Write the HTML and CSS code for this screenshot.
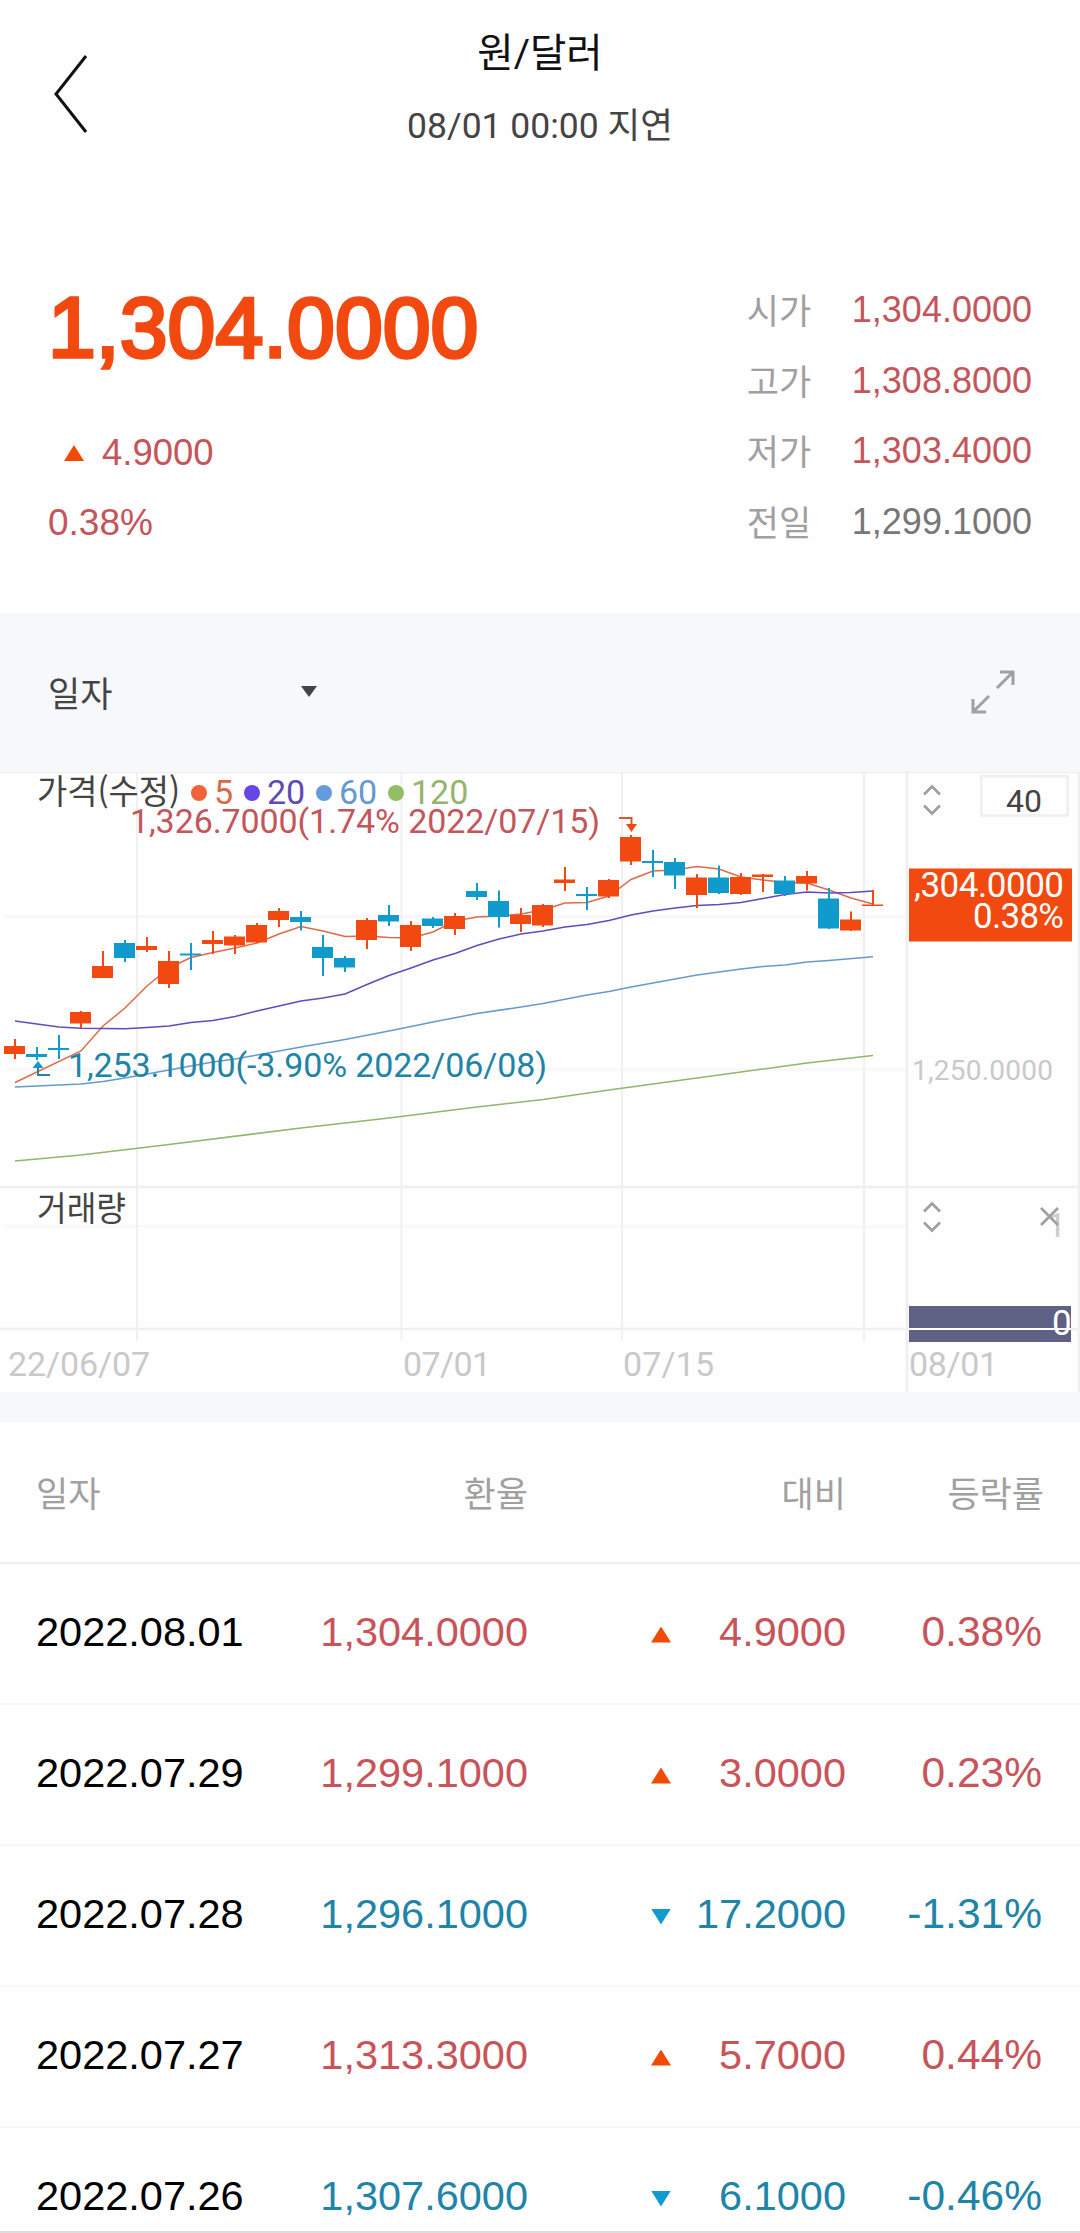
FILE: index.html
```html
<!DOCTYPE html>
<html lang="ko">
<head>
<meta charset="utf-8">
<title>원/달러</title>
<link rel="stylesheet" href="styles.css">
</head>
<body>
<header class="top">
  <svg class="back" viewBox="0 0 38 80"><path d="M34 2 4 40 34 78"/></svg>
  <h1>원/달러</h1>
  <p>08/01 00:00 지연</p>
</header>
<section class="quote">
  <div class="now">
    <strong>1,304.0000</strong>
    <span class="chg"><i class="up"></i>4.9000</span>
    <span class="pct">0.38%</span>
  </div>
  <dl>
    <dt>시가</dt><dd>1,304.0000</dd>
    <dt>고가</dt><dd>1,308.8000</dd>
    <dt>저가</dt><dd>1,303.4000</dd>
    <dt>전일</dt><dd class="prev">1,299.1000</dd>
  </dl>
</section>
<div class="bar">
  <span>일자</span>
  <svg class="caret" viewBox="0 0 16 11"><path d="M0 0H16L8 11Z"/></svg>
  <svg class="expand" viewBox="0 0 44 44"><path d="M26 18 42 2M29 2H42V15M18 26 2 42M2 29V42H15"/></svg>
</div>
<svg class="chart" viewBox="0 772 1080 620">
  <g class="grid" id="grid"></g>
  <g id="plot"></g>
  <g class="frame">
    <path d="M0 772H1080M0 1187H1080M0 1329H1080M907 772V1392M1079 772V1392"/>
  </g>
  <g class="label">
    <text class="kr" x="37" y="804" textLength="143" lengthAdjust="spacingAndGlyphs">가격(수정)</text>
    <circle cx="199" cy="793" r="8" fill="#ee6439"/><text x="214" y="803.5" fill="#d9694a">5</text>
    <circle cx="252" cy="793" r="8" fill="#6547e5"/><text x="267" y="803.5" fill="#6049b8">20</text>
    <circle cx="324" cy="793" r="8" fill="#659bdd"/><text x="339" y="803.5" fill="#6699cc">60</text>
    <circle cx="396" cy="793" r="8" fill="#93bd62"/><text x="411" y="803.5" fill="#93b56c">120</text>
    <text x="130" y="833" textLength="470" fill="#c4565b">1,326.7000(1.74% 2022/07/15)</text>
    <text x="68" y="1077" textLength="479" fill="#2084a7">1,253.1000(-3.90% 2022/06/08)</text>
    <text class="kr" x="37" y="1221" textLength="89" lengthAdjust="spacingAndGlyphs">거래량</text>
  </g>
  <g class="mark">
    <path class="hi" d="M619 818H631.500V826"/><path class="hif" d="M626 824H637L631.500 832Z"/>
    <path class="lo" d="M50 1075H38V1067"/><path class="lof" d="M32.500 1068H43.500L38 1061Z"/>
  </g>
  <g class="ctl">
    <text class="one" x="1047" y="1237">1</text>
    <path d="M924 794.500 932 786.500 940 794.500M924 805.500 932 813.500 940 805.500M924 1211.500 932 1203.500 940 1211.500M924 1222.500 932 1230.500 940 1222.500M1041 1208 1058 1225M1041 1225 1058 1208"/>
  </g>
  <rect class="box" x="981.250" y="776.250" width="86.500" height="39.250"/>
  <text class="n40" x="1024" y="811.700" text-anchor="middle">40</text>
  <rect x="909" y="868.500" width="163" height="73" fill="#f14910"/>
  <g class="tag"><text x="914" y="896.500" textLength="150">,304.0000</text><text x="973" y="927.500" textLength="91">0.38%</text></g>
  <text class="axis" x="912" y="1080" textLength="141">1,250.0000</text>
  <rect x="909" y="1306" width="162" height="36" fill="#5f6184"/><path class="zero" d="M909 1329H1071"/>
  <text class="tag" x="1052" y="1335" fill="#fff">0</text>
  <g class="date"><text x="8" y="1376" textLength="142">22/06/07</text><text x="403" y="1376" textLength="88">07/01</text><text x="623" y="1376" textLength="91">07/15</text><text x="909" y="1376" textLength="89">08/01</text></g>
</svg>
<div class="gap"></div>
<table>
  <colgroup><col class="c1"><col class="c2"><col class="c3"><col class="c4"><col class="c5"></colgroup>
  <thead><tr><th>일자</th><th>환율</th><th></th><th>대비</th><th>등락률</th></tr></thead>
  <tbody>
    <tr class="r"><td>2022.08.01</td><td>1,304.0000</td><td><i class="up"></i></td><td>4.9000</td><td>0.38%</td></tr>
    <tr class="r"><td>2022.07.29</td><td>1,299.1000</td><td><i class="up"></i></td><td>3.0000</td><td>0.23%</td></tr>
    <tr class="b"><td>2022.07.28</td><td>1,296.1000</td><td><i class="down"></i></td><td>17.2000</td><td>-1.31%</td></tr>
    <tr class="r"><td>2022.07.27</td><td>1,313.3000</td><td><i class="up"></i></td><td>5.7000</td><td>0.44%</td></tr>
    <tr class="b"><td>2022.07.26</td><td>1,307.6000</td><td><i class="down"></i></td><td>6.1000</td><td>-0.46%</td></tr>
  </tbody>
</table>
<script src="chart.js"></script>
</body>
</html>
```
FILE: styles.css
```css
* { box-sizing: border-box; margin: 0; padding: 0; }
body { width: 1080px; height: 2233px; overflow: hidden; background: #fefefe; font-family: "Liberation Sans", "Noto Sans CJK KR", sans-serif; color: #111; border-bottom: 2px solid #ddd; }
.top { height: 270px; padding-top: 27px; text-align: center; position: relative; font-family: Roboto, "Noto Sans CJK KR", sans-serif; }
.back { position: absolute; left: 52px; top: 54px; width: 38px; height: 80px; fill: none; stroke: #111; stroke-width: 3; }
h1 { font-size: 39.500px; font-weight: 400; line-height: 54px; }
.top p { font-size: 35.500px; line-height: 50px; margin-top: 20px; color: #444; }
.quote { height: 343px; padding: 0 48px; display: flex; justify-content: space-between; font-size: 36px; color: #c4565b; }
.now { display: flex; flex-direction: column; }
.now strong { font-size: 86px; line-height: 114px; color: #f14910; font-weight: 400; -webkit-text-stroke: 3.500px #f14910; }
.now span { line-height: 70px; height: 70px; }
.now .chg { margin-top: 34px; display: flex; align-items: center; padding-left: 16px; gap: 18px; font-size: 36.500px; }
.now .pct { font-size: 37px; }
.up, .down { display: inline-block; width: 20px; height: 16px; background: #f04a05; clip-path: polygon(50% 0, 100% 100%, 0 100%); }
.down { background: #109bcc; clip-path: polygon(0 0, 100% 0, 50% 100%); }
dl { display: grid; grid-template-columns: 105px auto; grid-auto-rows: 70.6px; line-height: 70px; padding-top: 5px; }
dt { color: #a0a0a0; font-size: 35px; line-height: 68px; font-family: "Noto Sans CJK KR", sans-serif; }
.prev { color: #777; }
.bar { height: 159px; background: #f7f8fb; display: flex; align-items: center; padding: 0 65px 2px 48px; font: 35px "Noto Sans CJK KR", sans-serif; color: #444; }
.caret { width: 16px; height: 11px; margin-left: 189px; fill: #444; }
.expand { width: 44px; height: 44px; margin-left: auto; fill: none; stroke: #a0a0a0; stroke-width: 3; }
.chart { display: block; width: 1080px; height: 620px; background: #fefefe; font-family: Roboto, sans-serif; }
.grid path { stroke: #f0f0f1; stroke-width: 2; fill: none; }
.grid .h { stroke: #f8f8f8; stroke-width: 3; }
.frame path { stroke: #efefef; stroke-width: 2.500; fill: none; }
.label { font-size: 34px; }
.label .kr { font-family: "Noto Sans CJK KR", sans-serif; font-size: 34px; fill: #444; }
.mark path { fill: none; stroke: #d45b2c; stroke-width: 2; }
.mark .hif { fill: #f14910; stroke: none; }
.mark .lo { stroke: #2584a5; }
.mark .lof { fill: #109bcc; stroke: none; }
.ctl path { fill: none; stroke: #a0a0a0; stroke-width: 2.700; }
.one { font-size: 34px; fill: #ccc; }
.box { fill: #fefefe; stroke: #efefef; stroke-width: 2.500; }
.n40 { font-size: 32px; fill: #444; }
.tag { font-size: 35px; fill: #fff; }
.axis { font-size: 28px; fill: #c9c9c9; }
.zero { stroke: #fff; stroke-width: 2; }
.date { font-size: 34px; fill: #c9c9c9; }
.ma { fill: none; stroke-width: 1.500; }
.gap { height: 30px; background: #f7f8fb; }
table { width: 1080px; table-layout: fixed; border-collapse: separate; border-spacing: 0; font-size: 41.500px; }
.c1 { width: 300px; } .c2 { width: 228px; } .c3 { width: 143px; } .c4 { width: 175px; } .c5 { width: 234px; }
th { height: 142px; font: 35px "Noto Sans CJK KR", sans-serif; color: #a0a0a0; text-align: right; border-bottom: 2px solid #efefef; padding-bottom: 2px; }
td { height: 141px; text-align: right; border-bottom: 2px solid #f7f7f7; color: #c8545a; white-space: nowrap; padding-bottom: 3px; }
td i.up, td i.down { display: block; margin: 5px 0 0 auto; }
th:last-child { padding-right: 36px; }
td:last-child { padding-right: 38px; font-size: 42.500px; }
.b td { color: #1e84a8; }
th:first-child, td:first-child { text-align: left; padding-left: 36px; color: #000; }
th:first-child { color: #a0a0a0; }
```
FILE: chart.js
```js
// Candles: x, wick top, wick bottom, body top, body bottom, colour (r = up, b = down)
const candles = [
  [15,1039,1059,1046,1054,'r'],[37,1047,1060,1054,1057,'b'],[59,1035,1059,1048,1050,'b'],[81,1011,1028,1012,1023.5,'r'],
  [103,951,978,966,978,'r'],[125,940,962,943,958,'b'],[147,937,952,946,950,'r'],[169,951,988,961,984,'r'],
  [191,943,970,953.5,955.5,'b'],[213,931,954,940,944,'r'],[235,935,954,936.5,945.5,'r'],[257,923,943,925,942.5,'r'],
  [279,908,927,911,920,'r'],[301,911,930.5,917,922,'b'],[323,935,976,947,958,'b'],[345,956,972,958,967.5,'b'],
  [367,918,949,920,940,'r'],[389,905,926,915,921.5,'b'],[411,921,951,925,947,'r'],[433,917,928,918.5,926,'b'],
  [455,913,935,916,929,'r'],[477,883,900,891,897,'b'],[499,890.5,927.5,901,917,'b'],[521,908,932,915,924,'r'],
  [543,904,927,905,925.5,'r'],[565,867,891,879.5,883,'r'],[587,887,910,894,896,'b'],[609,879,898,880,896.5,'r'],
  [631,835,865,837,861.5,'r'],[653,850,877,861,863,'b'],[675,858,889,862,875.5,'b'],[697,874,908,877.5,895,'r'],
  [719,865.5,894,877.5,893,'b'],[741,873,895,877,894,'r'],[763,874,892,874.5,877,'r'],[785,876,896,880.5,894,'b'],
  [807,871,890.5,876,883.5,'r'],[829,888,929,898.5,928.5,'b'],[851,911.5,931,919.5,930.5,'r'],[873,890,906,904.5,906,'r']
];
const averages = {
  '#659bcb': '15,1087 37,1086 59,1085 81,1084 103,1081.5 125,1078 147,1074 169,1070 191,1066 213,1062 235,1059 257,1055 279,1051 301,1047 345,1039.5 389,1031 433,1022 477,1013.5 521,1007 543,1003.5 587,995 609,991.5 631,987 653,983 697,975 741,969 763,966.5 785,965 807,962 829,960.5 873,956.7',
  '#93b56c': '15,1161 81,1155 169,1144.5 301,1128 389,1118 477,1107 543,1099.5 609,1090 675,1081 741,1072 807,1063 873,1055.4',
  '#dd6b48': '15,1082.5 81,1051 103,1026 125,1008 147,986 169,968 191,957.5 213,952.5 235,948 257,943 279,934 301,926.5 323,931 345,936.5 367,936 389,937.5 411,938 433,932 455,921 477,917 499,916 521,914 543,910 565,903 587,902.5 609,896 631,879.5 653,871 675,870 697,866.5 719,869 741,877 763,880 785,882.5 807,883 829,890 851,898 873,904',
  '#6549bd': '15,1021 59,1027 81,1028.3 125,1028.7 147,1027.5 169,1026 191,1022.5 213,1020.5 235,1016.5 257,1011 279,1006 301,1001 323,998 345,994 367,984.5 389,975.5 411,968 433,960 455,953.5 477,945.5 499,939 521,934 543,931 565,927 587,924.5 609,920.5 631,915 653,911 675,908 697,905.5 719,904.5 741,902.5 763,898.5 785,894.5 807,892 829,893 851,892.5 873,891'
};
let bars = '', lines = '', grid = '';
for (const y of [916.5, 1069.5, 1226.5]) grid += `<path class="h" d="M5 ${y}H906"/>`;
for (const x of [137, 401.5, 622, 864]) grid += `<path d="M${x} 772V1341"/>`;
for (const [x, hi, lo, top, bottom, kind] of candles) {
  const c = kind === 'r' ? '#f14910' : '#109bcc';
  bars += `<path fill="${c}" d="M${x - 1} ${hi}h2V${lo}h-2ZM${x - 11} ${top}h21V${bottom}h-21Z"/>`;
}
for (const [c, pts] of Object.entries(averages)) lines += `<polyline class="ma" stroke="${c}" points="${pts}"/>`;
document.getElementById('grid').innerHTML = grid;
document.getElementById('plot').innerHTML = lines + bars;
```
